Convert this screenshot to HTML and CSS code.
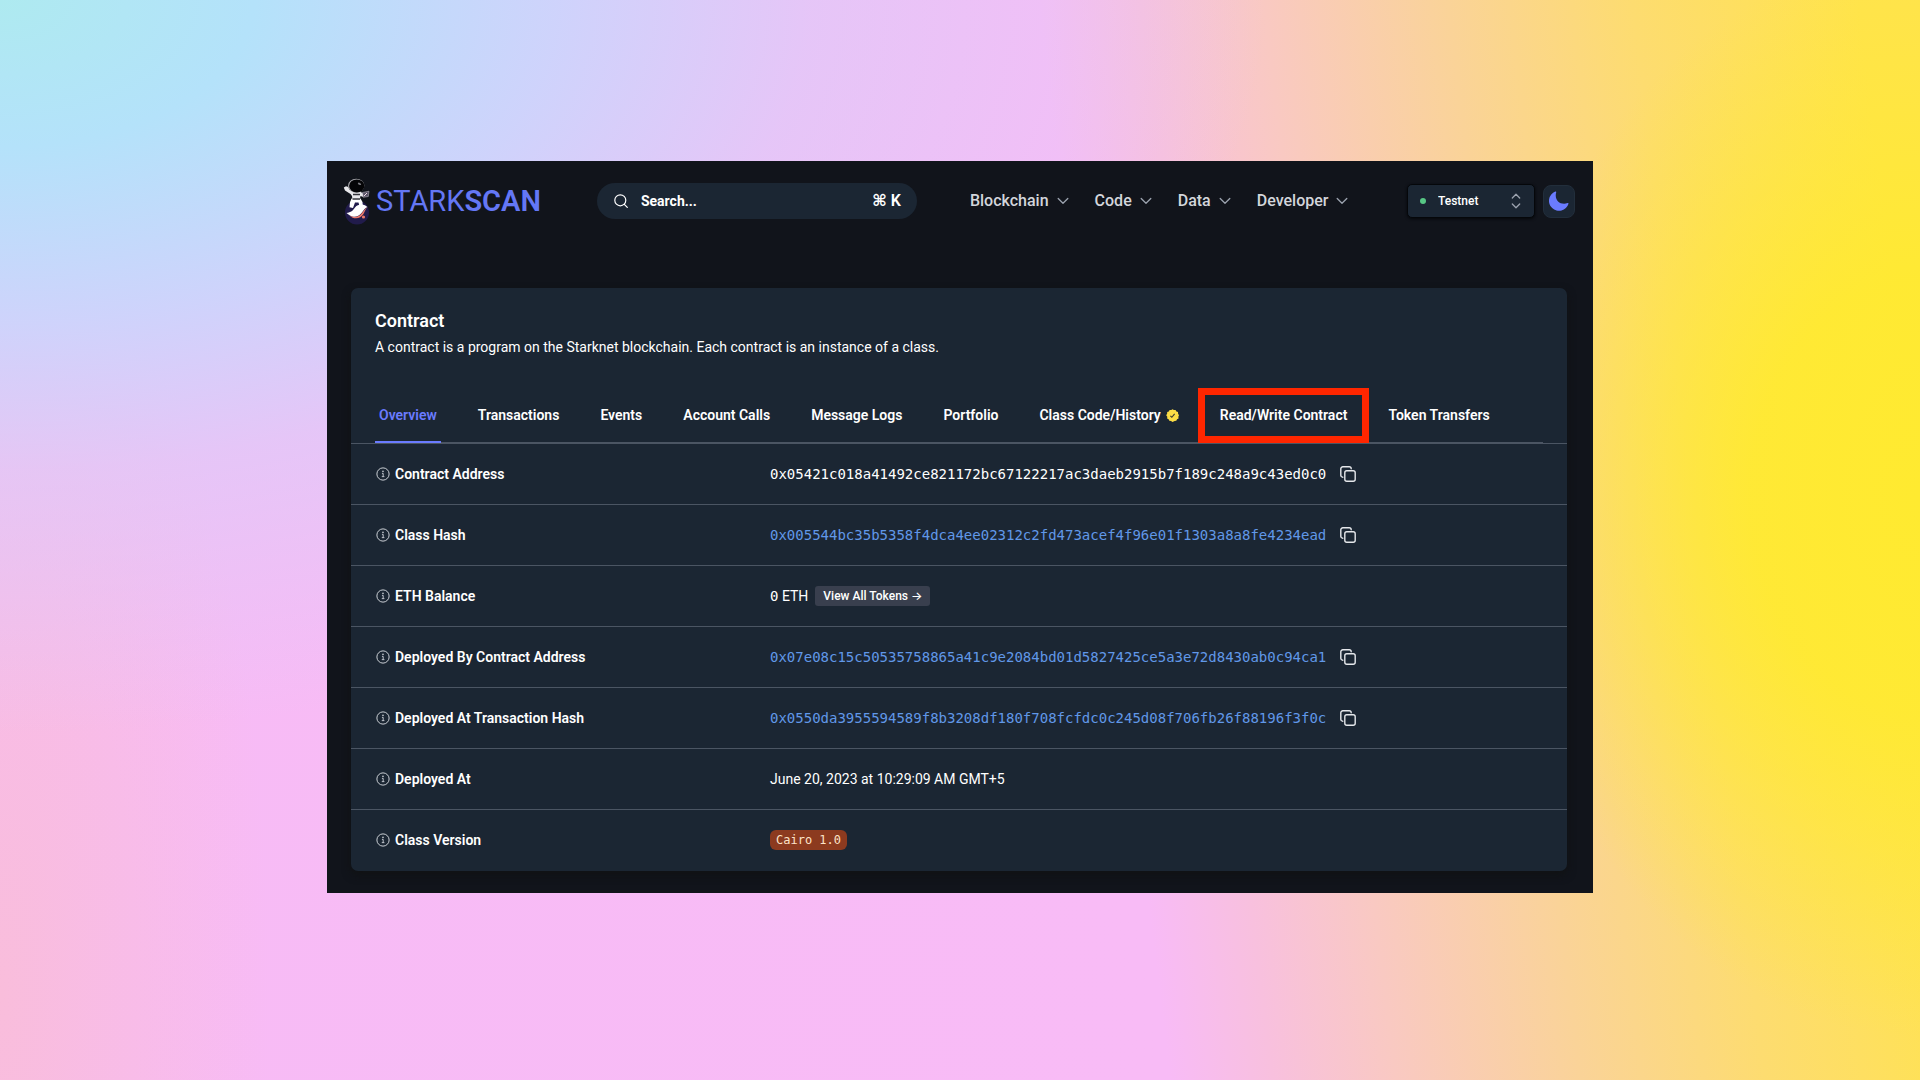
FILE: index.html
```
<!DOCTYPE html>
<html lang="en">
<head>
<meta charset="utf-8">
<meta name="viewport" content="width=device-width, initial-scale=1">
<title>Starkscan – Contract</title>
<link rel="stylesheet" href="styles.css">
</head>
<body>
<svg class="defs" aria-hidden="true">
  <symbol id="info" viewBox="0 0 16 16">
    <circle cx="8" cy="8" r="7" fill="none" stroke="currentColor" stroke-width="1.1"/>
    <path d="M6.8 7.3h1.4v3.6M6.6 11h3" fill="none" stroke="currentColor"/>
    <circle cx="8" cy="5" r=".9" fill="currentColor"/>
  </symbol>
  <symbol id="copy" viewBox="0 0 16 16">
    <rect x="4.8" y="4.8" width="10.4" height="10.4" rx="2" fill="none" stroke="currentColor" stroke-width="1.4"/>
    <path d="M2.8 11.2a2 2 0 0 1-2-2V2.800a2 2 0 0 1 2-2h6.400a2 2 0 0 1 2 2" fill="none" stroke="currentColor" stroke-width="1.4" stroke-linecap="round"/>
  </symbol>
  <symbol id="chevron" viewBox="0 0 12 12">
    <path d="M1.2 3.5L6 8.3l4.8-4.8" fill="none" stroke="currentColor" stroke-width="1.3" stroke-linecap="round" stroke-linejoin="round"/>
  </symbol>
</svg>
<div class="window">
  <header class="topbar">
    <a class="logo" href="#">
      <svg class="logo-mark" viewBox="0 0 27 47" aria-hidden="true">
        <circle cx="14" cy="34.500" r="12" fill="#211b4b"/>
        <path d="M3.500 35c4.500-.5 6.500-2.500 8.500-5.500 2.500-3 6-3.500 9-2.500 1 .3 2.500 1.200 3.500 2-3 1-4 3.500-6 6-3 4-8.500 5.500-13 1.500z" fill="#fff"/>
        <path d="M24.500 29c-2.500 1.500-3.500 3.500-5.500 6-3 4.200-8.500 5-12.500 2.500 4.500 4.500 11 3.500 14-1.500 1.500-2.800 2-5 4-7z" fill="#ec796b"/>
        <circle cx="20.500" cy="39" r="1.600" fill="#ec796b"/>
        <path d="M7.500 16L2 12.500.8 9.500 3 8.200l2.300.8 1 2.500L10 13.500h7l4 2.500-.5 3-3-1-1 4.500h-7l-.5-4.500z" fill="#e9e9ec"/>
        <path d="M8.500 20.500h9l2 3.500.3 4.500h-3.300l-1-4h-3.500L10 30l-3.500-.7.500-5z" fill="#fff"/>
        <path d="M10 16.500h7M9.500 21h7.500" stroke="#34343b" stroke-width="1.300"/>
        <path d="M19.500 14.500l6.500-1.300-.7 5.300-5 .8z" fill="#5a5468" stroke="#c9c5cf" stroke-width=".5"/>
        <path d="M21 18l3-3" stroke="#f3dfe9"/>
        <ellipse cx="13.200" cy="7.700" rx="8.200" ry="7" fill="#a9a9ae"/>
        <ellipse cx="13.800" cy="7.900" rx="7.700" ry="6.500" fill="#050507"/>
        <ellipse cx="16.500" cy="5.800" rx="1.800" ry="1" fill="#77777d" transform="rotate(30 16.500 5.800)"/>
      </svg>
      <span class="logo-text">STARK<b>SCAN</b></span>
    </a>
    <label class="search">
      <svg class="search-icon" viewBox="0 0 14 14" aria-hidden="true"><circle cx="6.300" cy="6.300" r="5.500" fill="none" stroke="currentColor" stroke-width="1.200"/><path d="M10.300 10.300l3 3" stroke="currentColor" stroke-width="1.200" stroke-linecap="round"/></svg>
      <input type="text" placeholder="Search..." aria-label="Search">
      <kbd>⌘ K</kbd>
    </label>
    <nav class="menu" aria-label="Main">
      <button type="button">Blockchain<svg><use href="#chevron"/></svg></button>
      <button type="button">Code<svg><use href="#chevron"/></svg></button>
      <button type="button">Data<svg><use href="#chevron"/></svg></button>
      <button type="button">Developer<svg><use href="#chevron"/></svg></button>
    </nav>
    <div class="network">
      <span class="dot"></span>
      <select aria-label="Network"><option>Testnet</option><option>Mainnet</option></select>
      <svg class="updown" viewBox="0 0 10 16" aria-hidden="true"><path d="M1.300 5L5 1.300 8.700 5M1.300 11L5 14.700 8.700 11" fill="none" stroke="currentColor" stroke-width="1.300" stroke-linecap="round" stroke-linejoin="round"/></svg>
    </div>
    <button type="button" class="theme" aria-label="Toggle dark mode">
      <svg viewBox="0 0 20 20" aria-hidden="true"><path d="M6.300.5a10 10 0 1 0 13.200 12.300c.1-.6-.3-.9-.9-.7C11 14.500 5 9 7.200 1.300 7.400.6 7 .3 6.300.5z" fill="#6a7bff"/></svg>
    </button>
  </header>

  <main class="card">
    <div class="card-head">
      <h1>Contract</h1>
      <p>A contract is a program on the Starknet blockchain. Each contract is an instance of a class.</p>
      <nav class="tabs" aria-label="Contract sections">
        <a class="tab active" href="#">Overview</a>
        <a class="tab" href="#">Transactions</a>
        <a class="tab" href="#">Events</a>
        <a class="tab" href="#">Account Calls</a>
        <a class="tab" href="#">Message Logs</a>
        <a class="tab" href="#">Portfolio</a>
        <a class="tab" href="#">Class Code/History<svg class="verified" viewBox="0 0 14 14" aria-hidden="true"><path d="M7 .2l1.500 1 1.800-.2.900 1.600 1.700.7.100 1.800 1 1.500-.7 1.700.2 1.800-1.600.9-.8 1.700-1.800.1L7 13.900l-1.600-1.100-1.800-.1-.8-1.700-1.600-.9.200-1.800L.2 6.600l1-1.500.1-1.800L3 2.600 3.900 1l1.800.2z" fill="#fbdc45"/><path d="M4.700 7.300l1.600 1.600 3-3.700" fill="none" stroke="#3c3a30" stroke-width="1.200"/></svg></a>
        <a class="tab marked" href="#">Read/Write Contract</a>
        <a class="tab" href="#">Token Transfers</a>
      </nav>
    </div>
    <table class="details">
      <tr>
        <th scope="row"><span class="label"><svg><use href="#info"/></svg>Contract Address</span></th>
        <td><span class="value"><span class="mono">0x05421c018a41492ce821172bc67122217ac3daeb2915b7f189c248a9c43ed0c0</span><button type="button" class="copy" aria-label="Copy"><svg><use href="#copy"/></svg></button></span></td>
      </tr>
      <tr>
        <th scope="row"><span class="label"><svg><use href="#info"/></svg>Class Hash</span></th>
        <td><span class="value"><a class="mono" href="#">0x005544bc35b5358f4dca4ee02312c2fd473acef4f96e01f1303a8a8fe4234ead</a><button type="button" class="copy" aria-label="Copy"><svg><use href="#copy"/></svg></button></span></td>
      </tr>
      <tr>
        <th scope="row"><span class="label"><svg><use href="#info"/></svg>ETH Balance</span></th>
        <td><span class="value balance"><span><span class="mono">0</span> ETH</span><button type="button" class="tokens">View All Tokens <span class="arrow">→</span></button></span></td>
      </tr>
      <tr>
        <th scope="row"><span class="label"><svg><use href="#info"/></svg>Deployed By Contract Address</span></th>
        <td><span class="value"><a class="mono" href="#">0x07e08c15c50535758865a41c9e2084bd01d5827425ce5a3e72d8430ab0c94ca1</a><button type="button" class="copy" aria-label="Copy"><svg><use href="#copy"/></svg></button></span></td>
      </tr>
      <tr>
        <th scope="row"><span class="label"><svg><use href="#info"/></svg>Deployed At Transaction Hash</span></th>
        <td><span class="value"><a class="mono" href="#">0x0550da3955594589f8b3208df180f708fcfdc0c245d08f706fb26f88196f3f0c</a><button type="button" class="copy" aria-label="Copy"><svg><use href="#copy"/></svg></button></span></td>
      </tr>
      <tr>
        <th scope="row"><span class="label"><svg><use href="#info"/></svg>Deployed At</span></th>
        <td>June 20, 2023 at 10:29:09 AM GMT+5</td>
      </tr>
      <tr>
        <th scope="row"><span class="label"><svg><use href="#info"/></svg>Class Version</span></th>
        <td><span class="value"><span class="version">Cairo 1.0</span></span></td>
      </tr>
    </table>
  </main>
</div>
</body>
</html>
```
FILE: styles.css
```
* { box-sizing: border-box; }

body {
  margin: 0;
  min-height: 100vh;
  padding: 161px 24px 160px;
  font: 14px/20px Roboto, "Liberation Sans", sans-serif;
  color: #fff;
  background:
    radial-gradient(ellipse 66% 68% at 0 0, #aeeaf0 0%, #b4e2fa 20%, rgba(203, 213, 252, 0.92) 44%, rgba(222, 202, 248, 0.7) 64%, rgba(240, 190, 245, 0) 100%),
    radial-gradient(ellipse 14% 75% at 0 92%, #f9bddb 0%, rgba(249, 189, 219, 0) 100%),
    radial-gradient(ellipse 22% 50% at 100% 46%, #ffea30 0%, rgba(255, 234, 48, 0.9) 40%, rgba(255, 232, 60, 0) 100%),
    linear-gradient(83deg, #f7bbf5 0%, #f8bbf6 57%, #f8c0de 62%, #f9c9c2 68%, #fad398 77%, #fddc70 86%, #ffe34e 97%);
}

a { color: inherit; text-decoration: none; }
button, input, select { font: inherit; color: inherit; }
button { border: 0; padding: 0; background: none; cursor: pointer; }
svg { display: block; flex: none; }
.defs { position: absolute; width: 0; height: 0; }

.window {
  max-width: 1266px;
  margin: 0 auto;
  padding: 0 26px 22px 24px;
  background: #11141b;
}

/* Top bar */
.topbar {
  display: flex;
  align-items: center;
  height: 80px;
  margin: 0 -8px;
}
.logo {
  display: flex;
  align-items: center;
  gap: 6px;
  color: #6477f5;
  font-size: 29px;
  line-height: 40px;
}
.logo-mark { width: 27px; height: 47px; }
.logo-text b { font-weight: 600; }
.search {
  display: flex;
  align-items: center;
  width: 320px;
  height: 36px;
  margin-left: 56px;
  padding: 0 16px 0 17px;
  border-radius: 18px;
  background: #1b2633;
}
.search-icon { width: 14px; height: 14px; }
.search input {
  flex: 1;
  min-width: 0;
  margin-left: 13px;
  padding: 0;
  border: 0;
  outline: 0;
  background: none;
  font-weight: 700;
}
.search input::placeholder { color: #fff; opacity: 1; }
.search kbd { font: 600 16px/20px Roboto, "DejaVu Sans", sans-serif; }
.menu {
  display: flex;
  gap: 26px;
  margin-left: 53px;
  color: #d3d6db;
  font-size: 16px;
  font-weight: 500;
}
.menu button { display: flex; align-items: center; gap: 8px; }
.menu svg { width: 12px; height: 12px; color: #9ca3af; }
.network {
  display: flex;
  align-items: center;
  position: relative;
  width: 128px;
  height: 34px;
  margin-left: auto;
  border: 1px solid #05070a;
  border-radius: 5px;
  background: #1b2633;
  box-shadow: 0 1px 3px #05070a;
}
.dot {
  position: absolute;
  left: 12px;
  width: 6px;
  height: 6px;
  border-radius: 50%;
  background: #57c785;
}
.network select {
  width: 100%;
  height: 100%;
  padding: 0 30px;
  border: 0;
  background: none;
  appearance: none;
  font-size: 12px;
  font-weight: 500;
}
.updown {
  position: absolute;
  right: 13px;
  width: 10px;
  height: 16px;
  color: #9ca3af;
  pointer-events: none;
}
.theme {
  display: grid;
  place-items: center;
  width: 32px;
  height: 33px;
  margin-left: 8px;
  border: 1px solid #222e3b;
  border-radius: 8px;
  background: #1b2633;
}
.theme svg { width: 20px; height: 20px; }

/* Contract card */
.card {
  margin-top: 47px;
  border-radius: 7px;
  background: #1b2633;
  box-shadow: 0 4px 8px rgba(16, 18, 18, 0.8);
}
.card-head { padding: 19px 24px 0; }
.card h1 { margin: 0; font-size: 18px; line-height: 28px; font-weight: 600; }
.card p { margin: 2px 0 31px; }
.tabs {
  display: flex;
  gap: 33px;
  border-bottom: 1px solid #4b5563;
  font-weight: 600;
}
.tab {
  display: flex;
  align-items: center;
  gap: 5px;
  position: relative;
  height: 54px;
  padding: 0 4px;
  white-space: nowrap;
}
.tab.active { color: #6a7bff; box-shadow: 0 1px #6a7bff, inset 0 -1px #6a7bff; }
.verified { width: 13px; height: 13px; }
.tab.marked::after {
  content: "";
  position: absolute;
  inset: 0 -18px -1px;
  border: 7px solid #ff2600;
}

.details { width: 100%; border-collapse: collapse; }
.details tr { height: 61px; border-top: 1px solid #4b5563; }
.details th {
  width: 419px;
  padding: 0 0 0 25px;
  text-align: left;
  font-weight: 600;
}
.details td { padding: 0; }
.label, .value { display: flex; align-items: center; }
.label { gap: 5px; }
.label svg { width: 14px; height: 14px; color: #d1d5db; }
.value { gap: 14px; }
.balance { gap: 7px; }
.mono { font-family: "DejaVu Sans Mono", monospace; }
a.mono { color: #6198e8; }
.copy svg { width: 16px; height: 16px; color: #e5e7eb; }
.tokens {
  height: 20px;
  padding: 0 8px;
  border-radius: 3px;
  background: #393f4e;
  font-size: 12px;
  font-weight: 500;
}
.arrow { font-family: Inter, sans-serif; }
.version {
  padding: 0 6px;
  border-radius: 6px;
  background: #8c3a1f;
  color: #fde3c8;
  font: 12px/20px "DejaVu Sans Mono", monospace;
}
```
